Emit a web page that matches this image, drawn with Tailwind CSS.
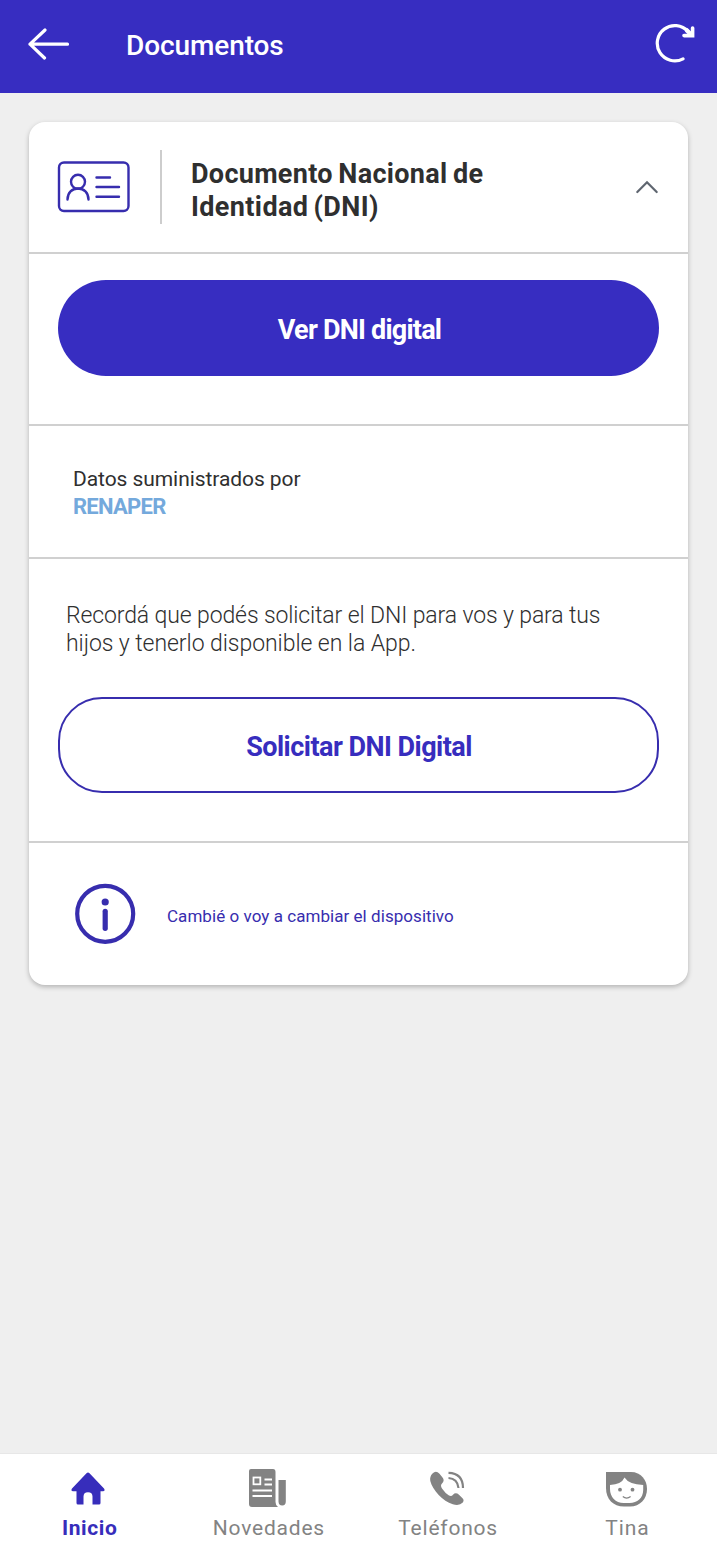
<!DOCTYPE html>
<html lang="es">
<head>
<meta charset="utf-8">
<meta name="viewport" content="width=device-width, initial-scale=1">
<title>Documentos</title>
<script src="https://cdn.jsdelivr.net/npm/@tailwindcss/browser@4"></script>
</head>
<body class="flex h-[1552px] w-[717px] flex-col overflow-hidden bg-[#efefef] font-['Roboto',sans-serif] text-[#2f2f2f]">
  <header class="flex h-[93px] shrink-0 items-center bg-[#372dc1] pr-[21px] pb-0.5 pl-7 text-white">
    <svg class="-mt-1 h-8 w-[42px]" viewBox="0 0 42 32" fill="none" stroke="currentColor" stroke-width="3.2" stroke-linecap="round" stroke-linejoin="round"><path d="M17 2 2 16.200l14.500 13.800M2 16.200h37.500"/></svg>
    <h1 class="ml-[56px] text-[28px] leading-8 font-medium tracking-[-0.1px]">Documentos</h1>
    <svg class="-mt-1.5 ml-auto h-10 w-[42px]" viewBox="0 0 42 40" fill="none" stroke="currentColor" stroke-width="3.200" stroke-linecap="round" stroke-linejoin="round"><path d="M29 35.800A17.600 17.600 0 1 1 34 8.500"/><path stroke-width="3.600" stroke-linejoin="miter" d="M38.600 5v7.600H30"/><path stroke-width="4.500" d="m33 7.500 4 4"/></svg>
  </header>

  <main class="flex-1 px-[29px] pt-[29px]">
    <section class="h-[863px] rounded-2xl bg-white shadow-[0_2px_5px_rgba(0,0,0,0.25)]">
      <div class="flex h-[132px] items-center border-b-2 border-[#d0d0d0] pr-[29px] pl-7">
        <svg class="h-[54px] w-[74px]" viewBox="0 0 74 54" fill="none" stroke="#372dae" stroke-width="2.400" stroke-linecap="round"><rect x="2" y="2.500" width="69.500" height="48.500" rx="5"/><circle cx="21" cy="21.800" r="7"/><path d="M10.500 39.500c0-7 4.700-11 10.500-11s10.500 4 10.500 11M39.500 17.500h13.500M39.500 27h22.500M39.500 36.800h22.500"/></svg>
        <div class="ml-[29px] h-[74px] w-0.5 bg-[#cdcdcd]"></div>
        <h2 class="ml-[29px] pt-[7px] text-[27px] leading-[33px] font-bold whitespace-nowrap"><span class="tracking-[0.3px] [word-spacing:-1.500px]">Documento Nacional de</span><br><span class="tracking-[0.38px] [word-spacing:-2px]">Identidad (DNI)</span></h2>
        <svg class="ml-auto h-4 w-6" viewBox="0 0 24 16" fill="none" stroke="#5f6670" stroke-width="2.200" stroke-linecap="round"><path d="m2.300 13 9.700-9.800L21.700 13"/></svg>
      </div>
      <div class="h-[172px] border-b-2 border-[#d0d0d0] px-[29px] pt-[26px]">
        <button class="block h-24 w-full rounded-full bg-[#372dc1] pt-1 pl-0.5 text-[27px] font-bold tracking-[-0.78px] text-white">Ver DNI digital</button>
      </div>
      <div class="h-[133px] border-b-2 border-[#d0d0d0] pt-[39px] pl-11 text-[21px] leading-7">
        <p class="tracking-[-0.07px]">Datos suministrados por</p>
        <p class="text-[22px] font-bold tracking-[-0.72px] text-[#74a9dc]">RENAPER</p>
      </div>
      <div class="h-[284px] border-b-2 border-[#d0d0d0] px-[29px] pt-[43px]">
        <p class="pl-2 text-[23px] leading-7 font-light whitespace-nowrap"><span class="tracking-[-0.12px]">Recordá que podés solicitar el DNI para vos y para tus</span><br><span class="tracking-[-0.06px]">hijos y tenerlo disponible en la App.</span></p>
        <button class="mt-[39px] block h-24 w-full rounded-[44px] border-2 border-[#372dae] pt-[5px] pl-px text-[27px] font-bold tracking-[-0.53px] text-[#372dbe]">Solicitar DNI Digital</button>
      </div>
      <a class="flex h-[141px] items-center pl-[46px] text-[#372dae]">
        <svg class="h-[62px] w-[62px]" viewBox="0 0 62 62" fill="none" stroke="currentColor"><circle cx="30.200" cy="30.800" r="28" stroke-width="4.200"/><circle cx="30.200" cy="19" r="3.600" fill="currentColor" stroke="none"/><path d="M30.200 28.300v17" stroke-width="5.200" stroke-linecap="round"/></svg>
        <span class="ml-[30px] pt-1.5 text-[17px] tracking-[0.05px]">Cambié o voy a cambiar el dispositivo</span>
      </a>
    </section>
  </main>

  <nav class="grid h-[99px] shrink-0 grid-cols-4 border-t border-[#e7e7e7] bg-white text-[21px] leading-7 text-[#838383]">
    <a class="flex flex-col items-center pt-3.5 font-bold text-[#372dbb]">
      <svg class="mr-[3px] h-[42px] w-[42px]" viewBox="0 0 42 42" fill="currentColor"><path d="M19.500 5.200q1.500-1.200 3 0L37 20.500q1.500 2.500-1 2.700h-2.500V35q0 1.500-1.500 1.500H25.500V28.500q0-4.300-4.500-4.300t-4.500 4.300V36.500H11q-1.500 0-1.500-1.500V23.200H6Q3.500 23 5 20.500Z"/></svg>
      <span class="mt-1 tracking-[0.6px]">Inicio</span>
    </a>
    <a class="flex flex-col items-center pt-3.5">
      <svg class="mr-0.5 h-[42px] w-[42px]" viewBox="0 0 42 42" fill="currentColor"><path d="M4 1h22q2.500 0 2.500 3v30q0 3 2.500 5H5q-3 0-3-3V3q0-2 2-2ZM31.500 12h7.300v21.500q0 4-3.600 4t-3.700-4Z"/><g fill="none" stroke="#fff" stroke-width="1.800"><rect x="6.500" y="9.500" width="6.800" height="6.800"/><path d="M17.500 11.500H25M17.500 16.500H25M5.500 22.500h19.500M5.500 28h19.500"/></g></svg>
      <span class="mt-1 tracking-[0.8px]">Novedades</span>
    </a>
    <a class="flex flex-col items-center pt-3.5">
      <svg class="h-[42px] w-[42px]" viewBox="0 0 42 42" fill="currentColor"><path d="M5.500 5.500q3.500-3.500 7 .3l3 3.700q2.500 3-.5 6-2 2 0 5 3 4.500 7 7 2.500 1.300 4-.8 2.700-2.700 6 .1l3.500 3.500q2 2 .3 4.200-3.500 3.700-10 1.700C16 33.500 5.500 22 3.300 13Q2.500 8.500 5.500 5.500Z"/><path d="M21.500 10q9 .5 10 10M21.500 4.800q14.500.5 14.500 15.200" fill="none" stroke="currentColor" stroke-width="2.200"/></svg>
      <span class="mt-1 tracking-[0.8px]">Teléfonos</span>
    </a>
    <a class="flex flex-col items-center pt-3.5">
      <svg class="h-[42px] w-[42px]" viewBox="0 0 42 42"><path fill="#838383" d="M0 4h25c10 0 16 8 16 17 0 10-7 17.500-17 17.500h-6C7 38.500 0 31 0 20Z"/><path fill="#fff" d="M4 17q11.500-.5 14.500-7.500Q23 16.500 37.200 17V22c0 8-6 13-13.500 13h-6C9.500 35 4 29 4 21Z"/><circle cx="14" cy="21.700" r="1.900" fill="#838383"/><circle cx="26.500" cy="21.700" r="1.900" fill="#838383"/><path d="M16.800 28.500q3.800 3.200 7.800 0" fill="none" stroke="#838383" stroke-width="1.200"/></svg>
      <span class="mt-1 tracking-[0.9px]">Tina</span>
    </a>
  </nav>
</body>
</html>
